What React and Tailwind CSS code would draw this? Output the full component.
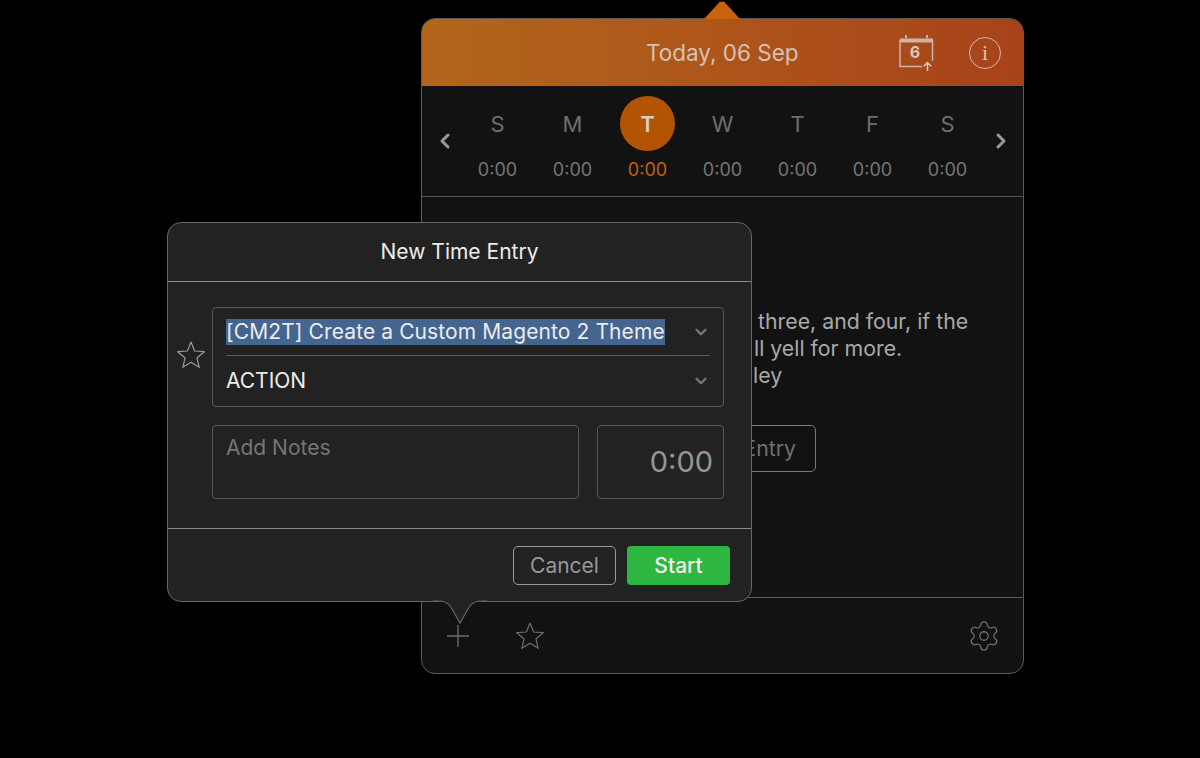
import React from "react";
import { ChevronDown, ChevronLeft, ChevronRight, Plus, Settings } from "lucide-react";

const days = [
  { letter: "S", time: "0:00" },
  { letter: "M", time: "0:00" },
  { letter: "T", time: "0:00", active: true },
  { letter: "W", time: "0:00" },
  { letter: "T", time: "0:00" },
  { letter: "F", time: "0:00" },
  { letter: "S", time: "0:00" },
];

function StarIcon({ className }) {
  return (
    <svg className={className} width="30" height="30" viewBox="0 0 30 30" fill="none">
      <path
        d="M15 2l3.64 8.98 9.67.69-7.41 6.25 2.33 9.41L15 22.2l-8.23 5.13 2.33-9.41-7.41-6.25 9.67-.69z"
        stroke="currentColor"
        strokeWidth="1.2"
        strokeLinejoin="round"
      />
    </svg>
  );
}

function CalendarIcon() {
  return (
    <svg width="38" height="38" viewBox="0 0 38 38" fill="none">
      <path d="M2 6.5h33" stroke="#c9b6a6" strokeWidth="4" />
      <path d="M8 1v3M29 1v3" stroke="#c9b6a6" strokeWidth="2" />
      <path d="M2 6v26.5h22M34.5 6v21" stroke="#c9b6a6" strokeWidth="1.5" />
      <path d="M29.5 37v-8.5M25.8 32.2l3.7-3.7 3.7 3.7" stroke="#d8cabd" strokeWidth="1.5" />
      <text x="17" y="24" textAnchor="middle" fill="#d5c7ba" fontSize="16" fontWeight="700" fontFamily="Inter, sans-serif">
        6
      </text>
    </svg>
  );
}

function InfoIcon() {
  return (
    <div className="flex h-[32px] w-[32px] items-center justify-center rounded-full border-[1.5px] border-[#cdb9a9] font-['Liberation_Serif',serif] text-[22px] text-[#d5c7ba]">
      i
    </div>
  );
}

function Day({ letter, time, active }) {
  return (
    <div className="flex w-[75px] flex-col items-center">
      <div
        className={`flex h-[55px] w-[55px] items-center justify-center rounded-full pt-[1px] text-[22px] ${
          active ? "bg-[#b35405] font-semibold text-[#d9cfc6]" : "text-[#6e6e6e]"
        }`}
      >
        {letter}
      </div>
      <div className={`mt-[8px] text-[18px] leading-[22px] ${active ? "text-[#c4620c]" : "text-[#767676]"}`}>{time}</div>
    </div>
  );
}

function Tail() {
  return (
    <svg className="absolute left-[265px] top-[377px]" width="54" height="26" viewBox="0 0 54 26" fill="none">
      <path d="M0 1h6c7 0 10 3 13 8l8 14 8-14c3-5 6-8 13-8h6V0H0z" fill="#222222" />
      <path d="M0 1h6c7 0 10 3 13 8l8 14 8-14c3-5 6-8 13-8h6" stroke="#666666" strokeWidth="1.2" />
    </svg>
  );
}

function Dialog() {
  return (
    <div className="absolute left-[167px] top-[222px] flex h-[380px] w-[585px] flex-col rounded-[14px] border border-[#666666] bg-[#222222]">
      <div className="flex h-[59px] items-center justify-center border-b border-[#8a8a8a] text-[21px] text-[#ececec]">
        New Time Entry
      </div>

      <div className="flex h-[247px] flex-col border-b border-[#8a8a8a] pl-[44px] pr-[27px] pt-[25px]">
        <div className="relative h-[100px] rounded-[4px] border border-[#565656] px-[13px] text-[21px] text-[#ececec]">
          <StarIcon className="absolute left-[-37px] top-[32px] text-[#9a9a9a]" />
          <div className="flex h-[48px] items-center justify-between border-b border-[#5c5c5c]">
            <span className="bg-[#44658f] leading-[26px] tracking-[0.1px]">[CM2T] Create a Custom Magento 2 Theme</span>
            <ChevronDown className="text-[#777777]" size={18} strokeWidth={3} />
          </div>
          <div className="flex h-[50px] items-center justify-between">
            <span>ACTION</span>
            <ChevronDown className="text-[#777777]" size={18} strokeWidth={3} />
          </div>
        </div>

        <div className="mt-[18px] flex gap-[18px]">
          <div className="h-[74px] w-[367px] rounded-[4px] border border-[#565656] px-[13px] pt-[8px] text-[21px] leading-[28px] text-[#767676]">
            Add Notes
          </div>
          <div className="flex h-[74px] flex-1 items-center justify-end rounded-[4px] border border-[#565656] pr-[10px] text-[29px] text-[#969696]">
            0:00
          </div>
        </div>
      </div>

      <div className="flex flex-1 items-start justify-end gap-[11px] pr-[21px] pt-[17px] text-[21px]">
        <button className="h-[39px] w-[103px] rounded-[5px] border-[1.5px] border-[#9a9a9a] text-[#989898]">Cancel</button>
        <button className="h-[39px] w-[103px] rounded-[4px] bg-[#2db640] font-medium text-[#f2f2f2]">Start</button>
      </div>

      <Tail />
    </div>
  );
}

export default function App() {
  return (
    <div className="relative h-[758px] w-[1200px] overflow-hidden bg-black pl-[421px] pt-[18px] font-['Inter',sans-serif]">
      {/* popover arrow */}
      <div className="absolute left-[704px] top-[1px] h-[18px] w-[36px] bg-[#c8620f] [clip-path:polygon(0_100%,44%_4%,56%_4%,100%_100%)]" />

      <div className="flex h-[656px] w-[603px] flex-col overflow-hidden rounded-[14px] border border-[#5a5a5a] bg-[#121212]">
        <div className="flex h-[67px] shrink-0 items-center justify-between bg-gradient-to-r from-[#b3661b] to-[#a8421a] pl-[224px] pr-[22px]">
          <div className="text-[22.5px] text-[#d2c3b5]">Today, 06 Sep</div>
          <div className="flex items-center gap-[33px]">
            <CalendarIcon />
            <InfoIcon />
          </div>
        </div>

        <div className="flex h-[111px] shrink-0 items-start border-b border-[#5a5a5a] pl-[11px] pt-[10px]">
          <ChevronLeft className="mt-[33px] text-[#999999]" size={24} strokeWidth={3} />
          <div className="ml-[3px] flex">
            {days.map((day, i) => (
              <Day key={i} {...day} />
            ))}
          </div>
          <ChevronRight className="ml-[4px] mt-[33px] text-[#999999]" size={24} strokeWidth={3} />
        </div>

        <div className="flex-1 pt-[111px] text-[21.3px] leading-[27px] text-[#a9a9a9]">
          <div className="pl-[336px]">three, and four, if the</div>
          <div className="pl-[332px]">ll yell for more.</div>
          <div className="pl-[331px]">ley</div>
          <div className="ml-[228px] mt-[36px] flex h-[47px] w-[166px] items-center justify-end rounded-[5px] border-[1.5px] border-[#7a7a7a] pr-[19px] text-[#6f6f6f]">
            Entry
          </div>
        </div>

        <div className="flex h-[76px] shrink-0 items-center justify-between border-t border-[#5a5a5a] pl-[18px] pr-[22px]">
          <div className="flex items-center gap-[39px]">
            <Plus className="text-[#6e6e6e]" size={36} strokeWidth={0.9} />
            <StarIcon className="text-[#6e6e6e]" />
          </div>
          <Settings className="text-[#6e6e6e]" size={34} strokeWidth={0.9} />
        </div>
      </div>

      <Dialog />
    </div>
  );
}
